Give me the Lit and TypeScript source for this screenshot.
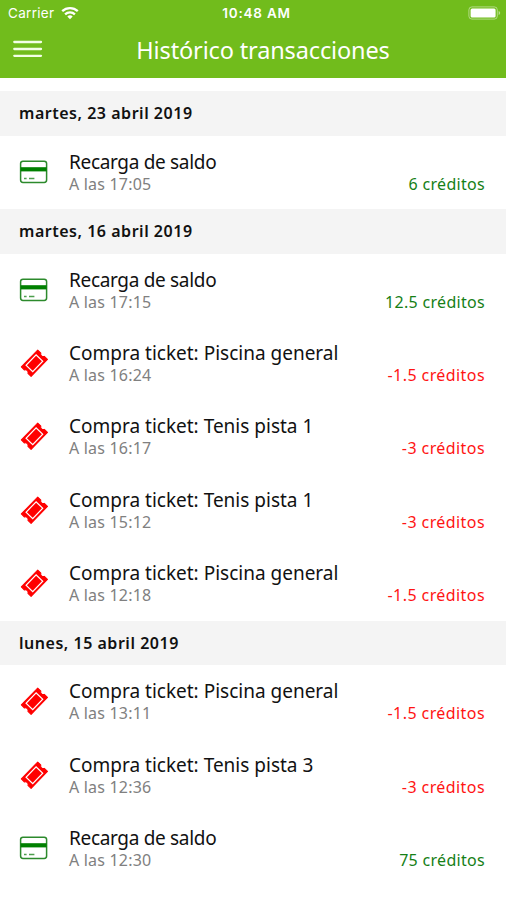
import { LitElement, html, css, svg } from "lit";
import { customElement, property } from "lit/decorators.js";

interface Entry {
  kind: "card" | "ticket";
  title: string;
  time: string;
  amount: string;
}

interface Day {
  date: string;
  entries: Entry[];
}

const DAYS: Day[] = [
  {
    date: "martes, 23 abril 2019",
    entries: [{ kind: "card", title: "Recarga de saldo", time: "17:05", amount: "6" }],
  },
  {
    date: "martes, 16 abril 2019",
    entries: [
      { kind: "card", title: "Recarga de saldo", time: "17:15", amount: "12.5" },
      { kind: "ticket", title: "Compra ticket: Piscina general", time: "16:24", amount: "-1.5" },
      { kind: "ticket", title: "Compra ticket: Tenis pista 1", time: "16:17", amount: "-3" },
      { kind: "ticket", title: "Compra ticket: Tenis pista 1", time: "15:12", amount: "-3" },
      { kind: "ticket", title: "Compra ticket: Piscina general", time: "12:18", amount: "-1.5" },
    ],
  },
  {
    date: "lunes, 15 abril 2019",
    entries: [
      { kind: "ticket", title: "Compra ticket: Piscina general", time: "13:11", amount: "-1.5" },
      { kind: "ticket", title: "Compra ticket: Tenis pista 3", time: "12:36", amount: "-3" },
      { kind: "card", title: "Recarga de saldo", time: "12:30", amount: "75" },
    ],
  },
];

const cardShape = svg`
  <rect x="1.6" y="4.2" width="26" height="21.2" rx="2.4" fill="none" stroke="#2c8a2c" stroke-width="1.5"/>
  <rect x="1.6" y="10.2" width="26" height="4.2" fill="#008000"/>
  <path d="M5 21.4h2.6M10 21.4h5.4" stroke="#4d9e4d" stroke-width="1.5"/>`;

const ticketShape = svg`
  <g transform="translate(15.4 15.2) rotate(-46)">
    <path fill="#ff0000" stroke="#ff0000" stroke-width="1" stroke-linejoin="round" d="M-11.8 -6.8H11.8V-2.4A2.6 2.6 0 0 0 11.8 2.4V6.8H-11.8V2.4A2.6 2.6 0 0 0 -11.8 -2.4Z"/>
    <rect x="-7.2" y="-4.6" width="14.4" height="9.2" fill="none" stroke="#fff" stroke-width="1.2"/>
  </g>`;

@customElement("transaction-row")
class TransactionRow extends LitElement {
  @property({ attribute: false }) entry!: Entry;

  static styles = css`
    :host {
      display: flex;
      box-sizing: border-box;
      height: 73.4px;
      padding: 0 21px 0 19px;
    }
    .icon {
      flex: none;
      width: 30px;
      height: 30px;
      margin-top: 21px;
    }
    .main {
      flex: 1;
      margin: 14px 0 0 20px;
      white-space: nowrap;
    }
    .title {
      font-size: 19px;
      line-height: 25px;
      color: #111;
    }
    .title.card {
      letter-spacing: -0.32px;
    }
    .detail {
      display: flex;
      justify-content: space-between;
      font-size: 16px;
      line-height: 18px;
    }
    .time {
      color: #808080;
      letter-spacing: 0.2px;
    }
    .in {
      color: #168016;
      letter-spacing: 0.3px;
    }
    .out {
      color: #ff1414;
      letter-spacing: 0.42px;
    }
  `;

  render() {
    const e = this.entry;
    return html`
      <svg class="icon" viewBox="0 0 30 30">${e.kind === "card" ? cardShape : ticketShape}</svg>
      <div class="main">
        <div class="title ${e.kind}"><span>${e.title}</span></div>
        <div class="detail">
          <span class="time">A las ${e.time}</span>
          <span class=${e.kind === "card" ? "in" : "out"}>${e.amount} créditos</span>
        </div>
      </div>
    `;
  }
}

@customElement("app-root")
class AppRoot extends LitElement {
  static styles = css`
    :host {
      display: block;
      height: 900px;
      overflow: hidden;
      background: #fff;
      font-family: "Noto Sans", sans-serif;
    }
    .top {
      height: 78px;
      background: #71bc1c;
      color: #fff;
    }
    .status {
      display: grid;
      grid-template-columns: 1fr auto 1fr;
      align-items: center;
      height: 26px;
      padding: 0 4px 0 8px;
      font: 500 13.5px/26px Inter, sans-serif;
    }
    .carrier {
      display: flex;
      align-items: center;
      gap: 7px;
      font-weight: 400;
      letter-spacing: 0.3px;
    }
    .clock {
      font-weight: 600;
      letter-spacing: 0.8px;
      padding-left: 3px;
    }
    .battery {
      justify-self: end;
    }
    .bar {
      display: grid;
      grid-template-columns: 43px 1fr 43px;
      align-items: center;
      height: 49px;
    }
    .menu {
      margin: -3px 0 0 13px;
    }
    .heading {
      margin: 0;
      text-align: center;
      font-size: 23.5px;
      font-weight: 400;
      letter-spacing: -0.14px;
      line-height: 49px;
      padding-left: 20px;
    }
    .list {
      padding-top: 13px;
    }
    .date {
      box-sizing: border-box;
      height: 44.6px;
      padding-left: 19px;
      background: #f4f4f4;
      color: #111;
      font-size: 16px;
      font-weight: 600;
      letter-spacing: 0.52px;
      line-height: 45px;
    }
  `;

  render() {
    return html`
      <header class="top">
        <div class="status">
          <span class="carrier">
            <span>Carrier</span>
            <svg width="18" height="14" viewBox="0 0 18 14" fill="none" stroke="#fff" stroke-width="2.3">
              <path d="M1.2 5.2A11.2 11.2 0 0 1 16.8 5.2"/>
              <path d="M4.1 8.4A7 7 0 0 1 13.9 8.4"/>
              <path d="M9 13.2L6.3 10.5A4 4 0 0 1 11.7 10.5Z" fill="#fff" stroke="none"/>
            </svg>
          </span>
          <span class="clock">10:48 AM</span>
          <svg class="battery" width="34" height="14" viewBox="0 0 34 14">
            <rect x=".9" y=".9" width="28.4" height="12.2" rx="3" fill="none" stroke="#fff" stroke-opacity=".45"/>
            <rect x="2.6" y="2.4" width="25" height="9.2" rx="1.5" fill="#fff"/>
            <path d="M30.6 5v4q1.6-.6 1.6-2t-1.6-2Z" fill="#fff" fill-opacity=".5"/>
          </svg>
        </div>
        <div class="bar">
          <svg class="menu" width="30" height="18" viewBox="0 0 30 18" stroke="#f3ffe6" stroke-width="2.3" stroke-linecap="round">
            <path d="M1.3 2H28M1.3 9H28M1.3 15.8H28"/>
          </svg>
          <h1 class="heading"><span>Histórico transacciones</span></h1>
        </div>
      </header>
      <main class="list">
        ${DAYS.map(
          (day) => html`
            <section>
              <div class="date"><span>${day.date}</span></div>
              ${day.entries.map((entry) => html`<transaction-row .entry=${entry}></transaction-row>`)}
            </section>
          `,
        )}
      </main>
    `;
  }
}
